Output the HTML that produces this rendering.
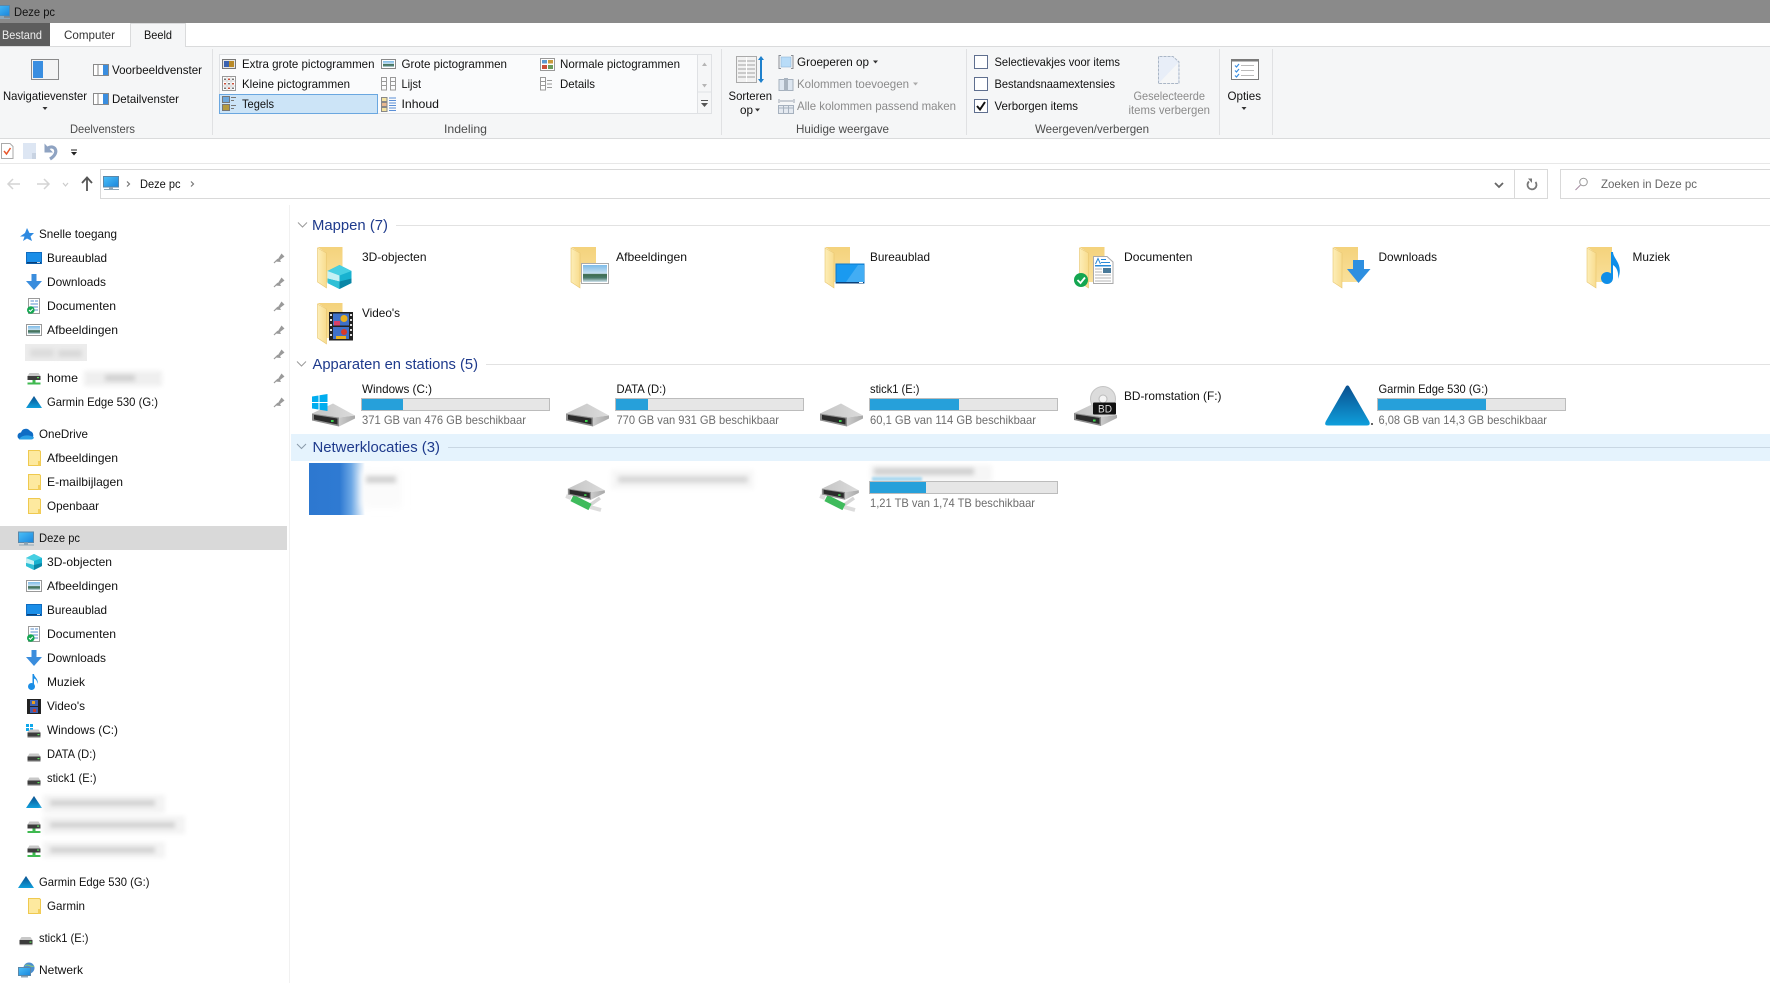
<!DOCTYPE html>
<html lang="nl"><head><meta charset="utf-8"><title>Deze pc</title>
<style>
html,body{margin:0;padding:0;background:#fff;width:1770px;height:983px;overflow:hidden}
svg{display:block}
text{font-family:"Liberation Sans",sans-serif;font-size:12px;fill:#111}
.h{font-size:15px;fill:#1e3a8c}
.g{fill:#8b8b8b}
.s{fill:#6d6d6d}
.l{fill:#4c4c4c}
.w{fill:#eee}
</style></head><body>
<svg xmlns="http://www.w3.org/2000/svg" width="1770" height="983" viewBox="0 0 1770 983">
<defs>
<filter id="b3" filterUnits="userSpaceOnUse" x="0" y="0" width="1770" height="983"><feGaussianBlur stdDeviation="4"/></filter>
<filter id="b2" filterUnits="userSpaceOnUse" x="0" y="0" width="1770" height="983"><feGaussianBlur stdDeviation="2.4"/></filter>
<filter id="b1" filterUnits="userSpaceOnUse" x="0" y="0" width="1770" height="983"><feGaussianBlur stdDeviation="1"/></filter>
<linearGradient id="fb" x1="0" y1="0" x2="0" y2="1"><stop offset="0" stop-color="#f4d27c"/><stop offset="1" stop-color="#f9e09a"/></linearGradient>
<linearGradient id="ff" x1="0" y1="0" x2="1" y2="0"><stop offset="0" stop-color="#fdeeb8"/><stop offset="1" stop-color="#f8dc8e"/></linearGradient>
<linearGradient id="tri" x1="0" y1="0" x2="0" y2="1"><stop offset="0" stop-color="#0a4f8e"/><stop offset="1" stop-color="#0f9fdc"/></linearGradient>
<linearGradient id="mon" x1="0" y1="0" x2="1" y2="1"><stop offset="0" stop-color="#4cc0f8"/><stop offset="1" stop-color="#1a86dc"/></linearGradient>
<linearGradient id="hdt" x1="0" y1="0" x2="1" y2="0"><stop offset="0" stop-color="#c4c4c4"/><stop offset="1" stop-color="#dcdcdc"/></linearGradient>
<linearGradient id="hdr" x1="0" y1="0" x2="1" y2="0"><stop offset="0" stop-color="#cbcbcb"/><stop offset="1" stop-color="#a8a8a8"/></linearGradient>
<linearGradient id="pic" x1="0" y1="0" x2="0" y2="1"><stop offset="0" stop-color="#7dbbe8"/><stop offset=".5" stop-color="#c8e0f0"/><stop offset=".55" stop-color="#3d6b4d"/><stop offset=".75" stop-color="#4a7a6a"/><stop offset="1" stop-color="#cfe2ee"/></linearGradient>
<linearGradient id="blob" x1="0" y1="0" x2="1" y2="0"><stop offset="0" stop-color="#2d78d0"/><stop offset=".55" stop-color="#2f7ad2"/><stop offset=".75" stop-color="#6aa6e4"/><stop offset=".95" stop-color="#dfecf9"/><stop offset="1" stop-color="#fff"/></linearGradient>

<g id="bf"><path d="M0 0H25V35H9V6Z" fill="url(#fb)"/><path d="M0 1L9 6V41L0 35Z" fill="url(#ff)" stroke="#e8c56e" stroke-width=".6"/></g>
<g id="sf"><path d="M.5.5H11.5L12.5 1.5V15.5H.5Z" fill="#fde99f" stroke="#efc94f"/><rect x="10" y="11" width="2.5" height="4.5" fill="#f4cf5c"/></g>
<g id="hd"><path d="M1 10L22 0L44 12L28 14Z" fill="url(#hdt)"/><path d="M28 14L44 12V15L28 23Z" fill="url(#hdr)"/><path d="M1 10L28 14V23L1 17Z" fill="#8d8d8d"/><path d="M3 11.4L26.5 15V21L3 16Z" fill="#2b2b2b"/><rect x="20" y="16.5" width="2.6" height="2" fill="#3dd24d"/></g>
<g id="nd"><path d="M3 16L8 18M27 27L38 30" stroke="#dcdcdc" stroke-width="4"/><path d="M27 25L37 18" stroke="#d6d6d6" stroke-width="3.5"/><path d="M9 18L27 27" stroke="#3fbb5c" stroke-width="7"/><use href="#hd" transform="translate(4 0) scale(.86)"/></g>
<g id="shd"><path d="M3 0H12L14 3H1Z" fill="#c8c8c8"/><rect x="1" y="3" width="13" height="5" fill="#3c3c3c"/><rect x="1" y="7" width="13" height="1.2" fill="#999"/><rect x="11" y="4.5" width="2" height="1.2" fill="#5be05b"/></g>
<g id="snd"><path d="M3 0H12L14 3H1Z" fill="#c8c8c8"/><rect x="1" y="3" width="13" height="4" fill="#3c3c3c"/><rect x="10.5" y="4" width="2" height="1.2" fill="#5be05b"/><rect x="6" y="7" width="3" height="3" fill="#3fb950"/><rect x="1" y="9.5" width="13" height="2" fill="#3fb950"/></g>
<path id="stri" d="M8 0L16 12H0Z" fill="url(#tri)"/>
<g id="spin"><path d="M4 7L7.500 1.500L10.500 4.500L6 8L7 10L1 9.500Z" fill="#9a9a9a"/><path d="M4 7L0 11" stroke="#9a9a9a" stroke-width="1.200"/></g>
<g id="sdesk"><rect x=".5" y=".5" width="15" height="11" fill="#1a8ee8" stroke="#0f6cc0"/><rect x="1" y="10" width="14" height="1.400" fill="#0a3f78"/><rect x="11" y="10.200" width="3" height=".8" fill="#fff"/></g>
<path id="sdl" d="M5.500 0H10.500V7H16L8 16L0 7H5.500Z" fill="#3a8ddd"/>
<g id="sdoc"><rect x="1.500" y=".5" width="11" height="15" fill="#fff" stroke="#9a9a9a"/><path d="M3.500 3H7M8 3H11M3.500 6H11M3.500 9H11M3.500 12H11" stroke="#5a8fcf" stroke-width="1"/><circle cx="3.800" cy="12" r="3.800" fill="#14a651"/><path d="M2 12L3.400 13.400L5.800 10.800" fill="none" stroke="#fff" stroke-width="1"/></g>
<g id="spic"><rect x=".5" y=".5" width="15" height="11" fill="#fff" stroke="#999"/><rect x="2" y="2" width="12" height="8" fill="url(#pic)"/></g>
<g id="scube"><path d="M8 0L16 4V12L8 16L0 12V4Z" fill="#18b2d0"/><path d="M8 0L16 4L8 7L0 4Z" fill="#46cfe2"/><path d="M0 4L8 7V11L0 9Z" fill="#c5f1f4"/><path d="M0 9L8 11V16L0 12Z" fill="#2fc0d6"/><path d="M8 11L16 9V12L8 16Z" fill="#0a86a6"/></g>
<g id="snote"><circle cx="3.500" cy="12.500" r="3.500" fill="#1b8ee6"/><path d="M6 1V12.500H4.500V0H6C6 3 11 5 9.500 10C9 6 7.500 5 6 4.500" fill="#1b8ee6"/></g>
<g id="svid"><rect width="14" height="15" fill="#222"/><rect x="3" y="1" width="8" height="6" fill="#3f5fb0"/><rect x="3" y="8" width="8" height="6" fill="#3f5fb0"/><rect x="5" y="2" width="3" height="3" fill="#e8a020"/><rect x="6" y="10" width="3" height="3" fill="#c83a2a"/></g>
<g id="spc"><rect x=".5" y=".5" width="15" height="10.500" fill="url(#mon)" stroke="#5b87a8"/><rect x="6" y="11" width="4" height="2" fill="#8fa6b6"/><rect x="1" y="13" width="15" height="1" fill="#8fa6b6"/></g>
</defs>

<!-- title bar -->
<rect width="1770" height="23" fill="#8a8a8a"/>
<use href="#spc" x="-6" y="5"/>
<text x="14" y="16" textLength="41" lengthAdjust="spacingAndGlyphs">Deze pc</text>

<!-- tabs -->
<rect x="0" y="23" width="50" height="23" fill="#5d5d5d"/>
<text class="w" x="2" y="39" textLength="40" lengthAdjust="spacingAndGlyphs">Bestand</text>
<text x="64" y="39" textLength="51" lengthAdjust="spacingAndGlyphs" style="fill:#333">Computer</text>

<!-- ribbon -->
<rect x="0" y="46" width="1770" height="92.500" fill="#f5f6f7"/>
<rect x="0" y="46" width="1770" height="1" fill="#dadbdc"/>
<rect x="0" y="138" width="1770" height="1" fill="#dadbdc"/>
<path d="M130.500 47V23.500H185.500V47" fill="#f5f6f7" stroke="#dadbdc"/>
<rect x="131" y="44" width="54" height="4" fill="#f5f6f7"/>
<text x="144" y="39" textLength="28" lengthAdjust="spacingAndGlyphs">Beeld</text>
<g fill="#e0e1e3"><rect x="212" y="49" width="1" height="86"/><rect x="721" y="49" width="1" height="86"/><rect x="966" y="49" width="1" height="86"/><rect x="1219" y="49" width="1" height="86"/><rect x="1272" y="49" width="1" height="86"/></g>

<!-- panes group -->
<rect x="31.500" y="59.500" width="27" height="20" fill="#f4f4f4" stroke="#8a8a8a"/><rect x="33" y="61" width="10" height="17" fill="#3a8ee0"/>
<text x="3" y="100" textLength="84" lengthAdjust="spacingAndGlyphs">Navigatievenster</text>
<path d="M42.500 107H47.500L45 110Z" fill="#333"/>
<rect x="93.500" y="64.500" width="15" height="11" fill="#fff" stroke="#8a8a8a"/><rect x="103" y="65" width="5" height="10" fill="#3a8ee0"/><path d="M98 65V75" stroke="#8a8a8a"/>
<text x="112" y="74" textLength="90" lengthAdjust="spacingAndGlyphs">Voorbeeldvenster</text>
<rect x="93.500" y="93.500" width="15" height="11" fill="#fff" stroke="#8a8a8a"/><rect x="103" y="94" width="5" height="10" fill="#3a8ee0"/><path d="M98 94V104" stroke="#8a8a8a"/>
<text x="112" y="103" textLength="67" lengthAdjust="spacingAndGlyphs">Detailvenster</text>
<text class="l" x="70" y="133" textLength="65" lengthAdjust="spacingAndGlyphs">Deelvensters</text>

<!-- gallery -->
<rect x="219.500" y="54.500" width="478" height="59" fill="#fafbfc" stroke="#dfe1e4"/>
<rect x="697.500" y="54.500" width="14" height="59" fill="#f5f6f7" stroke="#dfe1e4"/>
<path d="M698 92H711" stroke="#dfe1e4"/>
<path d="M702 66H707L704.500 62.500Z M702 84H707L704.500 87.500Z" fill="#b5b5b5"/>
<path d="M701 100H708V101H701Z M701 103H708L704.500 107Z" fill="#555"/>
<rect x="219.500" y="94.500" width="158" height="19" fill="#cce4f7" stroke="#6aa7e0"/>

<rect x="222.500" y="59.500" width="13" height="9" fill="#e6e6e6" stroke="#777"/><rect x="224" y="61" width="6" height="6" fill="#3a62b0"/><rect x="229" y="61" width="5" height="6" fill="#b98a28"/>
<text x="242" y="68" textLength="132.500" lengthAdjust="spacingAndGlyphs">Extra grote pictogrammen</text>
<rect x="381.500" y="59.500" width="14" height="9" fill="#fff" stroke="#888"/><rect x="383" y="61" width="11" height="6" fill="url(#pic)"/>
<text x="401.500" y="68" textLength="105.500" lengthAdjust="spacingAndGlyphs">Grote pictogrammen</text>
<rect x="540.500" y="58.500" width="14" height="12" fill="#fff" stroke="#999"/><rect x="542" y="60" width="5" height="3.500" fill="#5a9ad0"/><rect x="548" y="60" width="5" height="3.500" fill="#c99a3a"/><rect x="542" y="65" width="5" height="4" fill="#c9503a"/><rect x="548" y="65" width="5" height="4" fill="#6a9a5a"/>
<text x="560" y="68" textLength="120" lengthAdjust="spacingAndGlyphs">Normale pictogrammen</text>

<rect x="222.500" y="76.500" width="13" height="14" fill="#fff" stroke="#999"/><path d="M227 77V90M231 77V90M223 81H235M223 86H235" stroke="#d4d4d4"/><path d="M224 78.500h2v1.500h-2zM232 78.500h2v1.500h-2zM228 83h2v1.500h-2zM224 87.500h2v1.500h-2zM232 87.500h2v1.500h-2z" fill="#777"/><path d="M228 78.500h2v1.500h-2zM224 83h2v1.500h-2zM232 83h2v1.500h-2zM228 87.500h2v1.500h-2z" fill="#c94f3a"/>
<text x="242" y="88" textLength="108" lengthAdjust="spacingAndGlyphs">Kleine pictogrammen</text>
<g fill="none" stroke="#999"><rect x="381.500" y="77.500" width="5" height="12.500"/><rect x="390.500" y="77.500" width="5" height="12.500"/><path d="M382 81.500H386M382 85.500H386M391 81.500H395M391 85.500H395"/></g>
<text x="401.500" y="88" textLength="19.500" lengthAdjust="spacingAndGlyphs">Lijst</text>
<rect x="540.500" y="77.500" width="5" height="12.500" fill="#fff" stroke="#999"/><path d="M541 81.500H545M541 85.500H545" stroke="#999"/><path d="M547 80.500H552M547 84H552M547 87.500H552" stroke="#999"/>
<text x="560" y="88" textLength="35" lengthAdjust="spacingAndGlyphs">Details</text>

<rect x="222.500" y="96.500" width="7" height="6" fill="#6ea8dc" stroke="#777"/><rect x="222.500" y="104.500" width="7" height="6" fill="#b59a3e" stroke="#777"/><path d="M231 97.500H236M231 100.500H234M231 105.500H236M231 108.500H234" stroke="#777"/>
<text x="242" y="108" textLength="32" lengthAdjust="spacingAndGlyphs">Tegels</text>
<rect x="381.500" y="97.500" width="5.500" height="4" fill="#f4e3a0" stroke="#888"/><rect x="381.500" y="102.500" width="5.500" height="4" fill="#e8b890" stroke="#888"/><rect x="381.500" y="107.500" width="5.500" height="4" fill="#f4e3a0" stroke="#888"/><path d="M389 98H396M389 100.500H396M389 103H396M389 105.500H396M389 108H396M389 110.500H396" stroke="#5b8fd6"/>
<text x="401.500" y="108" textLength="37.500" lengthAdjust="spacingAndGlyphs">Inhoud</text>
<text class="l" x="444" y="133" textLength="43" lengthAdjust="spacingAndGlyphs">Indeling</text>

<!-- current view group -->
<rect x="736.500" y="56.500" width="20" height="26" fill="#f2f2f2" stroke="#aaa"/><path d="M738 61H755M738 65H755M738 69H755M738 73H755M738 77H755" stroke="#bdbdbd" stroke-width="1.400"/><path d="M746.500 57V82" stroke="#fff" stroke-width="1"/>
<path d="M761 58V81" stroke="#1e80cc" stroke-width="2"/><path d="M758 60L761 56L764 60ZM758 79L761 83L764 79Z" fill="#1e80cc"/>
<text x="728.500" y="100" textLength="43.500" lengthAdjust="spacingAndGlyphs">Sorteren</text>
<text x="740" y="114" textLength="13" lengthAdjust="spacingAndGlyphs">op</text>
<path d="M755 108.500H760L757.500 111.500Z" fill="#333"/>
<path d="M781 55.500H779V68.500H781M791 55.500H793V68.500H791" fill="none" stroke="#8a8f96"/><rect x="781" y="57" width="10" height="10" fill="#b8dcf8" stroke="#8fb6d6" stroke-width=".6"/>
<text x="797" y="66" textLength="72" lengthAdjust="spacingAndGlyphs">Groeperen op</text>
<path d="M873 60.500H878L875.500 63.500Z" fill="#333"/>
<rect x="779" y="79.500" width="14" height="11" fill="#dde6f0" stroke="#a6b1be"/><rect x="784" y="78" width="4" height="13" fill="#a9b4c0"/>
<text class="g" x="797" y="88" textLength="112" lengthAdjust="spacingAndGlyphs">Kolommen toevoegen</text>
<path d="M913 82.500H918L915.500 85.500Z" fill="#aaa"/>
<path d="M779 99V103M794 99V103M780 101H793" stroke="#9aa4b0"/><rect x="778.500" y="105.500" width="15" height="8" fill="#e4e9f0" stroke="#a6b1be"/><path d="M783.500 106V113M788.500 106V113M779 108H793" stroke="#a6b1be"/>
<text class="g" x="797" y="110" textLength="159" lengthAdjust="spacingAndGlyphs">Alle kolommen passend maken</text>
<text class="l" x="796" y="133" textLength="93" lengthAdjust="spacingAndGlyphs">Huidige weergave</text>

<!-- show/hide -->
<rect x="974.500" y="55.500" width="13" height="13" fill="#fff" stroke="#5f6f8f"/>
<rect x="974.500" y="77.500" width="13" height="13" fill="#fff" stroke="#5f6f8f"/>
<rect x="974.500" y="99.500" width="13" height="13" fill="#fff" stroke="#5f6f8f"/>
<path d="M977 106L980 109.500L985 102" fill="none" stroke="#111" stroke-width="2"/>
<text x="994.500" y="66" textLength="125.500" lengthAdjust="spacingAndGlyphs">Selectievakjes voor items</text>
<text x="994.500" y="88" textLength="120.500" lengthAdjust="spacingAndGlyphs">Bestandsnaamextensies</text>
<text x="994.500" y="110" textLength="83.500" lengthAdjust="spacingAndGlyphs">Verborgen items</text>
<path d="M1158.500 56.500H1173L1179 62V83.500H1158.500Z" fill="#e8eef8"/><path d="M1158.500 83.500L1178 63V83.500Z" fill="#f5f6f7"/><path d="M1158.500 83.500V56.500H1173L1179 62V83.500Z" fill="none" stroke="#aab6c6" stroke-dasharray="3 1"/>
<text class="g" x="1133.500" y="100" textLength="71.500" lengthAdjust="spacingAndGlyphs">Geselecteerde</text>
<text class="g" x="1128.500" y="114" textLength="81.500" lengthAdjust="spacingAndGlyphs">items verbergen</text>
<text class="l" x="1035" y="133" textLength="114" lengthAdjust="spacingAndGlyphs">Weergeven/verbergen</text>

<rect x="1231.500" y="59.500" width="27" height="20" fill="#fff" stroke="#7a7a7a"/><rect x="1232" y="60" width="26" height="1.500" fill="#7a7a7a"/><path d="M1235 65.500l1.500 1.500l2.500-3M1235 70.500l1.500 1.500l2.500-3M1235 75.500l1.500 1.500l2.500-3" fill="none" stroke="#3a8ee0" stroke-width="1.200"/><path d="M1241 65.500H1254M1241 70.500H1254M1241 75.500H1254" stroke="#bbb"/>
<text x="1227.500" y="100" textLength="33.500" lengthAdjust="spacingAndGlyphs">Opties</text>
<path d="M1241.500 107H1246.500L1244 110Z" fill="#333"/>

<!-- QAT -->
<path d="M1.500 143.500H10L13 146.500V158.500H1.500Z" fill="#fff" stroke="#aaa"/><path d="M4 151L6.500 154L10.500 148" fill="none" stroke="#e8562a" stroke-width="1.500"/>
<rect x="23" y="143" width="13" height="16" fill="#dde6f3"/><rect x="32" y="153" width="4" height="6" fill="#c8d3e2"/>
<path d="M48 148C54 144 61 152 50 159" fill="none" stroke="#8fa3c2" stroke-width="3.200"/><path d="M44.500 143.500V152.500H53Z" fill="#8fa3c2"/>
<path d="M71 149.500H77V150.500H71ZM71 152H77L74 155.500Z" fill="#222"/>
<rect x="0" y="163" width="1770" height="1" fill="#e8e8e8"/>

<!-- nav -->
<g fill="none" stroke="#d4d4d4" stroke-width="1.500"><path d="M8 184H20M13 179L8 184L13 189"/><path d="M37 184H49M44 179L49 184L44 189"/></g>
<path d="M63 183L65.500 186L68 183" fill="none" stroke="#ccc" stroke-width="1.200"/>
<path d="M87 191V178M82 183L87 177.500L92 183" fill="none" stroke="#555" stroke-width="1.800"/>
<rect x="100.500" y="169.500" width="1447" height="29" fill="#fff" stroke="#d9d9d9"/>
<path d="M1514.500 170V198" stroke="#d9d9d9"/>
<use href="#spc" x="103" y="176"/>
<path d="M127 181.500L129.500 184L127 186.500" fill="none" stroke="#777" stroke-width="1.200"/>
<text x="140" y="188" textLength="40.500" lengthAdjust="spacingAndGlyphs">Deze pc</text>
<path d="M191 181.500L193.500 184L191 186.500" fill="none" stroke="#777" stroke-width="1.200"/>
<path d="M1495 183L1499 187L1503 183" fill="none" stroke="#666" stroke-width="1.800"/>
<path d="M1535.500 182A4.500 4.500 0 1 1 1529 181.500" fill="none" stroke="#777" stroke-width="1.800"/><path d="M1528 178.500H1532V183Z" fill="#777"/>
<rect x="1560.500" y="169.500" width="215" height="29" fill="#fff" stroke="#d9d9d9"/>
<circle cx="1583.500" cy="182" r="3.800" fill="none" stroke="#999"/><path d="M1580.500 185L1575.500 190" stroke="#a58aa0"/>
<text x="1601" y="188" textLength="96" lengthAdjust="spacingAndGlyphs" style="fill:#666">Zoeken in Deze pc</text>

<!-- sidebar -->
<rect x="289" y="205" width="1" height="778" fill="#f1f1f1"/>
<path d="M27 228L29.500 233H34L30.500 236.500L32 241L27 238.500L23 241L24.500 236.500H20L25 233Z" fill="#2d89e0"/>
<text x="39" y="238" textLength="78" lengthAdjust="spacingAndGlyphs">Snelle toegang</text>
<use href="#sdesk" x="26" y="252"/><text x="47" y="262" textLength="60" lengthAdjust="spacingAndGlyphs">Bureaublad</text>
<use href="#sdl" x="26" y="274"/><text x="47" y="286" textLength="59" lengthAdjust="spacingAndGlyphs">Downloads</text>
<use href="#sdoc" x="27" y="298"/><text x="47" y="310" textLength="69" lengthAdjust="spacingAndGlyphs">Documenten</text>
<use href="#spic" x="26" y="324"/><text x="47" y="334" textLength="71" lengthAdjust="spacingAndGlyphs">Afbeeldingen</text>
<rect x="25" y="344" width="62" height="17" fill="#ececec"/><rect x="30" y="349" width="24" height="8" fill="#dcdcdc" filter="url(#b2)"/><rect x="58" y="350" width="24" height="7" fill="#d8d8d8" filter="url(#b2)"/>
<use href="#snd" x="26.500" y="373"/><text x="47" y="382" textLength="31" lengthAdjust="spacingAndGlyphs">home</text>
<rect x="84" y="371" width="78" height="15" fill="#efefef" filter="url(#b2)"/><rect x="105" y="375" width="30" height="6" fill="#cfcfcf" filter="url(#b2)"/>
<use href="#stri" x="26" y="396"/><text x="47" y="406" textLength="111" lengthAdjust="spacingAndGlyphs">Garmin Edge 530 (G:)</text>
<use href="#spin" x="274" y="252"/><use href="#spin" x="274" y="276"/><use href="#spin" x="274" y="300"/><use href="#spin" x="274" y="324"/><use href="#spin" x="274" y="348"/><use href="#spin" x="274" y="372"/><use href="#spin" x="274" y="396"/>

<path d="M21 439.500A3.500 3.500 0 0 1 21 432.500A5 5 0 0 1 30 431A4.500 4.500 0 0 1 30.500 439.500Z" fill="#0f6cc4"/><path d="M19 439.500C21 435 29 434 34 437.500A3 3 0 0 1 31 439.500Z" fill="#2aa0e6"/>
<text x="39" y="438" textLength="49" lengthAdjust="spacingAndGlyphs">OneDrive</text>
<use href="#sf" x="28" y="450"/><text x="47" y="462" textLength="71" lengthAdjust="spacingAndGlyphs">Afbeeldingen</text>
<use href="#sf" x="28" y="474"/><text x="47" y="486" textLength="76" lengthAdjust="spacingAndGlyphs">E-mailbijlagen</text>
<use href="#sf" x="28" y="498"/><text x="47" y="510" textLength="52" lengthAdjust="spacingAndGlyphs">Openbaar</text>

<rect x="0" y="526" width="287" height="24" fill="#d9d9d9"/>
<use href="#spc" x="18" y="531.500"/>
<text x="39" y="542" textLength="41" lengthAdjust="spacingAndGlyphs">Deze pc</text>
<use href="#scube" x="26" y="554"/><text x="47" y="566" textLength="65" lengthAdjust="spacingAndGlyphs">3D-objecten</text>
<use href="#spic" x="26" y="580"/><text x="47" y="590" textLength="71" lengthAdjust="spacingAndGlyphs">Afbeeldingen</text>
<use href="#sdesk" x="26" y="604"/><text x="47" y="614" textLength="60" lengthAdjust="spacingAndGlyphs">Bureaublad</text>
<use href="#sdoc" x="27" y="626"/><text x="47" y="638" textLength="69" lengthAdjust="spacingAndGlyphs">Documenten</text>
<use href="#sdl" x="26" y="650"/><text x="47" y="662" textLength="59" lengthAdjust="spacingAndGlyphs">Downloads</text>
<use href="#snote" x="28" y="674"/><text x="47" y="686" textLength="38" lengthAdjust="spacingAndGlyphs">Muziek</text>
<use href="#svid" x="27" y="699"/><text x="47" y="710" textLength="38" lengthAdjust="spacingAndGlyphs">Video's</text>
<g fill="#10a8ea"><rect x="26" y="724" width="3" height="3"/><rect x="30" y="724" width="3" height="3"/><rect x="26" y="728" width="3" height="3"/><rect x="30" y="728" width="3" height="3"/></g>
<use href="#shd" x="26.500" y="729.500"/><text x="47" y="734" textLength="71" lengthAdjust="spacingAndGlyphs">Windows (C:)</text>
<use href="#shd" x="26.500" y="753.500"/><text x="47" y="758" textLength="49" lengthAdjust="spacingAndGlyphs">DATA (D:)</text>
<use href="#shd" x="26.500" y="777.500"/><text x="47" y="782" textLength="49.500" lengthAdjust="spacingAndGlyphs">stick1 (E:)</text>
<use href="#stri" x="26" y="796"/>
<rect x="43" y="795" width="122" height="18" fill="#f3f3f3" filter="url(#b2)"/><rect x="50" y="800" width="105" height="6" fill="#d2d2d2" filter="url(#b2)"/>
<use href="#snd" x="26.500" y="821.500"/>
<rect x="43" y="816" width="142" height="18" fill="#f3f3f3" filter="url(#b2)"/><rect x="50" y="822" width="125" height="6" fill="#d2d2d2" filter="url(#b2)"/>
<use href="#snd" x="26.500" y="845.500"/>
<rect x="43" y="842" width="122" height="16" fill="#f3f3f3" filter="url(#b2)"/><rect x="50" y="847" width="105" height="6" fill="#d2d2d2" filter="url(#b2)"/>
<use href="#stri" x="18" y="876"/><text x="39" y="886" textLength="110.500" lengthAdjust="spacingAndGlyphs">Garmin Edge 530 (G:)</text>
<use href="#sf" x="28" y="898"/><text x="47" y="910" textLength="38" lengthAdjust="spacingAndGlyphs">Garmin</text>
<use href="#shd" x="18.500" y="937"/><text x="39" y="942" textLength="49.500" lengthAdjust="spacingAndGlyphs">stick1 (E:)</text>
<circle cx="29" cy="968" r="5.500" fill="#4a8fd0"/><path d="M25 966C28 963 31 968 34 966" stroke="#8fc878" fill="none"/>
<rect x="18.500" y="967.500" width="12" height="8" fill="url(#mon)" stroke="#5b87a8"/><rect x="21" y="976" width="7" height="1.500" fill="#8fa6b6"/>
<text x="39" y="974" textLength="44" lengthAdjust="spacingAndGlyphs">Netwerk</text>

<!-- Mappen -->
<path d="M298 222.500L302.500 227L307 222.500" fill="none" stroke="#9a9a9a"/>
<text class="h" x="312" y="230" textLength="76" lengthAdjust="spacingAndGlyphs">Mappen (7)</text>
<rect x="396" y="225" width="1374" height="1" fill="#e2e2e2"/>

<use href="#bf" x="317.500" y="247"/>
<use href="#scube" transform="translate(327.500 265) scale(1.500)"/>
<text x="362" y="261" textLength="64.500" lengthAdjust="spacingAndGlyphs">3D-objecten</text>

<use href="#bf" x="571" y="247"/>
<rect x="581.500" y="263.500" width="27" height="20" fill="#fff" stroke="#aaa"/><rect x="583" y="265" width="24" height="17" fill="url(#pic)"/>
<text x="616" y="261" textLength="71" lengthAdjust="spacingAndGlyphs">Afbeeldingen</text>

<use href="#bf" x="825" y="247"/>
<rect x="836" y="264" width="28" height="19" fill="#1a9af0" stroke="#0f78c8"/><path d="M846 282L858 265H864V282Z" fill="#42adf4"/><rect x="836" y="282" width="28" height="1.500" fill="#0a3f78"/><rect x="859" y="282" width="4" height="1" fill="#fff"/>
<text x="870" y="261" textLength="60" lengthAdjust="spacingAndGlyphs">Bureaublad</text>

<use href="#bf" x="1079.500" y="247"/>
<path d="M1093.500 256.500H1107L1113 262V283.500H1093.500Z" fill="#fff" stroke="#aaa"/>
<path d="M1095.500 264L1098 258.500L1100.500 264M1101 259.500H1106M1101 262.500H1110" fill="none" stroke="#2a8ad8"/><rect x="1095" y="265" width="16" height="1.500" fill="#2a8ad8"/><path d="M1095 269H1102M1095 272H1102M1095 275H1111M1095 278H1111M1095 281H1111" stroke="#b5b5b5"/><rect x="1103" y="268" width="8" height="5" fill="#4a7a9a"/>
<circle cx="1081" cy="280" r="7" fill="#14a651"/><path d="M1077.500 280L1080.500 283L1085 277.500" fill="none" stroke="#fff" stroke-width="1.800"/>
<text x="1124" y="261" textLength="68.500" lengthAdjust="spacingAndGlyphs">Documenten</text>

<use href="#bf" x="1333" y="247"/>
<path d="M1353 260H1364V269H1370.500L1358.500 283L1347 269H1353Z" fill="#2e8fe0"/>
<text x="1378.500" y="261" textLength="58.500" lengthAdjust="spacingAndGlyphs">Downloads</text>

<use href="#bf" x="1587" y="247"/>
<circle cx="1607" cy="278" r="6" fill="#0f8ee8"/><path d="M1611 252H1613C1613 259 1624 264 1618 279C1619 271 1616 267 1613 265V278H1611Z" fill="#0f8ee8"/>
<text x="1632.500" y="261" textLength="37.500" lengthAdjust="spacingAndGlyphs">Muziek</text>

<use href="#bf" x="317.500" y="303"/>
<rect x="329" y="312" width="24" height="28.500" fill="#222"/><rect x="333" y="313.500" width="16" height="12" fill="#3f70c8"/><rect x="333" y="327" width="16" height="12" fill="#3f70c8"/><path d="M330 314h2v2h-2zM330 319h2v2h-2zM330 324h2v2h-2zM330 329h2v2h-2zM330 334h2v2h-2zM350 314h2v2h-2zM350 319h2v2h-2zM350 324h2v2h-2zM350 329h2v2h-2zM350 334h2v2h-2z" fill="#ddd"/><circle cx="344" cy="318.500" r="3.500" fill="#e8b020"/><rect x="334" y="321" width="6" height="4.500" fill="#d8406a"/><circle cx="344" cy="332" r="3" fill="#d83a2a"/><rect x="336" y="336" width="10" height="3" fill="#e8b020"/>
<text x="362" y="317" textLength="38" lengthAdjust="spacingAndGlyphs">Video's</text>

<!-- Apparaten -->
<path d="M297 361.500L301.500 366L306 361.500" fill="none" stroke="#9a9a9a"/>
<text class="h" x="312.500" y="369" textLength="165.500" lengthAdjust="spacingAndGlyphs">Apparaten en stations (5)</text>
<rect x="486" y="364" width="1284" height="1" fill="#e2e2e2"/>

<use href="#hd" x="311" y="403.500"/>
<g fill="#00adef"><path d="M312 396.500L318.500 395.500V402H312Z"/><path d="M319.500 395.300L327.500 394V402H319.500Z"/><path d="M312 403H318.500V409.500L312 408.500Z"/><path d="M319.500 403H327.500V411L319.500 409.700Z"/></g>
<text x="362" y="393" textLength="70" lengthAdjust="spacingAndGlyphs">Windows (C:)</text>
<rect x="361.500" y="398.500" width="188" height="12" fill="#e6e6e6" stroke="#bcbcbc"/><rect x="362" y="399" width="41" height="11" fill="#26a0da"/>
<text class="s" x="362" y="424" textLength="164" lengthAdjust="spacingAndGlyphs">371 GB van 476 GB beschikbaar</text>

<use href="#hd" x="565" y="403.500"/>
<text x="616.500" y="393" textLength="49.500" lengthAdjust="spacingAndGlyphs">DATA (D:)</text>
<rect x="615.500" y="398.500" width="188" height="12" fill="#e6e6e6" stroke="#bcbcbc"/><rect x="616" y="399" width="32" height="11" fill="#26a0da"/>
<text class="s" x="616.500" y="424" textLength="162.500" lengthAdjust="spacingAndGlyphs">770 GB van 931 GB beschikbaar</text>

<use href="#hd" x="819" y="403.500"/>
<text x="870" y="393" textLength="49.500" lengthAdjust="spacingAndGlyphs">stick1 (E:)</text>
<rect x="869.500" y="398.500" width="188" height="12" fill="#e6e6e6" stroke="#bcbcbc"/><rect x="870" y="399" width="89" height="11" fill="#26a0da"/>
<text class="s" x="870" y="424" textLength="166" lengthAdjust="spacingAndGlyphs">60,1 GB van 114 GB beschikbaar</text>

<use href="#hd" x="1073" y="403"/>
<circle cx="1103" cy="399" r="12.500" fill="#dcdcdc" stroke="#c4c4c4"/><circle cx="1103" cy="399" r="4" fill="#f4f4f4" stroke="#bbb"/>
<rect x="1093" y="402.500" width="23" height="12" rx="1" fill="#111"/><text x="1098" y="412.500" textLength="14" lengthAdjust="spacingAndGlyphs" style="fill:#ddd;font-size:11px">BD</text>
<text x="1124" y="400" textLength="97.500" lengthAdjust="spacingAndGlyphs">BD-romstation (F:)</text>

<path d="M1347.500 385.500C1348.500 385.500 1349 386 1350 388L1369 421C1370.500 424 1369.500 425.500 1367 425.500H1328C1325 425.500 1324.500 424 1326 421L1345 388C1346 386 1346.500 385.500 1347.500 385.500Z" fill="url(#tri)"/>
<rect x="1371" y="423" width="2" height="2" fill="#666"/>
<text x="1378.500" y="393" textLength="109.500" lengthAdjust="spacingAndGlyphs">Garmin Edge 530 (G:)</text>
<rect x="1377.500" y="398.500" width="188" height="12" fill="#e6e6e6" stroke="#bcbcbc"/><rect x="1378" y="399" width="108" height="11" fill="#26a0da"/>
<text class="s" x="1378.500" y="424" textLength="168.500" lengthAdjust="spacingAndGlyphs">6,08 GB van 14,3 GB beschikbaar</text>

<!-- Netwerklocaties -->
<rect x="291" y="434" width="1479" height="27" fill="#e5f3fd"/>
<path d="M297 444L301.500 448.500L306 444" fill="none" stroke="#8a9aaa"/>
<text class="h" x="312.500" y="452" textLength="127.500" lengthAdjust="spacingAndGlyphs">Netwerklocaties (3)</text>
<rect x="448" y="447" width="1322" height="1" fill="#c9d7e3"/>

<rect x="309" y="463" width="56" height="52" fill="url(#blob)"/>
<rect x="362" y="470" width="40" height="38" fill="#fbfbfb" filter="url(#b3)"/>
<rect x="366" y="476" width="30" height="7" fill="#d2d2d2" filter="url(#b2)"/>

<use href="#nd" x="563" y="480"/>
<rect x="611" y="470" width="143" height="19" fill="#f7f7f7" filter="url(#b2)"/>
<rect x="618" y="476" width="130" height="7" fill="#d8d8d8" filter="url(#b2)"/>

<use href="#nd" x="817" y="480"/>
<rect x="870" y="465" width="122" height="17" fill="#f6f6f6" filter="url(#b2)"/>
<rect x="874" y="468" width="100" height="7" fill="#d0d0d0" filter="url(#b2)"/>
<rect x="872" y="477" width="50" height="4" fill="#a8d8f0" filter="url(#b1)"/>
<rect x="869.500" y="481.500" width="188" height="12" fill="#e6e6e6" stroke="#bcbcbc"/><rect x="870" y="482" width="56" height="11" fill="#26a0da"/>
<text class="s" x="870" y="507" textLength="165" lengthAdjust="spacingAndGlyphs">1,21 TB van 1,74 TB beschikbaar</text>
</svg>
</body></html>
